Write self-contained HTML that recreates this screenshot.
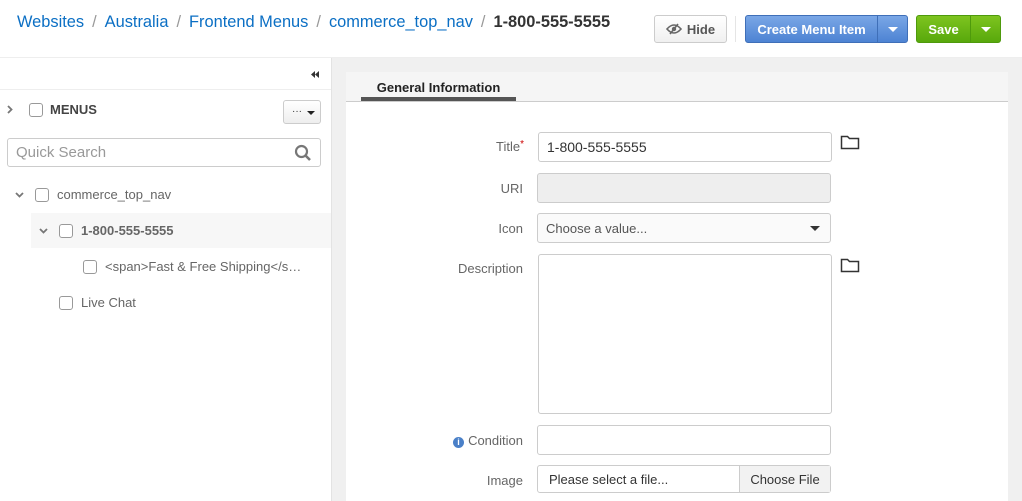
<!DOCTYPE html>
<html><head><style>
*{box-sizing:border-box;margin:0;padding:0}
body{width:1022px;height:501px;overflow:hidden;background:#fff;font-family:"Liberation Sans",sans-serif;position:relative;color:#555}
.a{position:absolute}
.bc{left:17px;top:13px;font-size:16.4px;color:#0b6fc4;white-space:nowrap}
.bc .s{color:#999;margin:0 8px}
.bc b{color:#333}
.btn{position:absolute;height:28px;border-radius:3px;font-size:13px;font-weight:bold;display:flex;align-items:center;justify-content:center}
.cb{position:absolute;width:14px;height:14px;border:1px solid #999;border-radius:3px;background:#fff}
.lbl{position:absolute;font-size:13px;color:#666;text-align:right;width:100px}
.inp{position:absolute;border:1px solid #ccc;border-radius:3px;background:#fff;font-size:14px;color:#333;padding-left:8px;display:flex;align-items:center}
.car{width:0;height:0;border-left:5px solid transparent;border-right:5px solid transparent;border-top:5px solid #fff}
</style></head><body>
<div class="a bc">Websites<span class="s">/</span>Australia<span class="s">/</span>Frontend Menus<span class="s">/</span>commerce_top_nav<span class="s">/</span><b>1-800-555-5555</b></div>
<div class="btn" style="left:654px;top:15px;width:73px;border:1px solid #ccc;background:linear-gradient(#fff,#f0f0f0);color:#555">
<svg width="16" height="12" viewBox="0 0 16 12" style="margin-right:5px"><path d="M1 6Q8-2 15 6Q8 14 1 6Z" fill="none" stroke="#666" stroke-width="1.6"/><circle cx="8" cy="6" r="2.2" fill="#666"/><path d="M4 11L12 1" stroke="#666" stroke-width="1.6"/></svg>Hide</div>
<div class="a" style="left:735px;top:16px;width:1px;height:26px;background:#e5e5e5"></div>
<div class="btn" style="left:745px;top:15px;width:163px;background:linear-gradient(#7aa7e6,#4d83d3);border:1px solid #3f6fb8;color:#fff;justify-content:flex-start">
<span style="width:131px;text-align:center">Create Menu Item</span><span style="width:1px;height:26px;background:#3f6fb8"></span><span style="flex:1;display:flex;justify-content:center"><span class="car"></span></span></div>
<div class="btn" style="left:916px;top:15px;width:85px;background:linear-gradient(#7ec41f,#58a80c);border:1px solid #4e9a0c;color:#fff;justify-content:flex-start">
<span style="width:53px;text-align:center">Save</span><span style="width:1px;height:26px;background:#4e9a0c"></span><span style="flex:1;display:flex;justify-content:center"><span class="car"></span></span></div>
<div class="a" style="left:0;top:57px;width:1022px;height:1px;background:#eee"></div>
<!-- sidebar -->
<div class="a" style="left:331px;top:58px;width:1px;height:443px;background:#e3e3e3"></div>
<svg class="a" style="left:311px;top:71px" width="8" height="7" viewBox="0 0 8 7"><path d="M4 0L0 3.5L4 7ZM8 0L4 3.5L8 7Z" fill="#333"/></svg>
<div class="a" style="left:0;top:89px;width:331px;height:1px;background:#eee"></div>
<svg class="a" style="left:7px;top:105px" width="6" height="9" viewBox="0 0 6 9"><path d="M1 1L4.5 4.5L1 8" fill="none" stroke="#777" stroke-width="1.8"/></svg>
<div class="cb" style="left:29px;top:103px"></div>
<div class="a" style="left:50px;top:102px;font-size:13px;font-weight:bold;color:#444">MENUS</div>
<div class="a" style="left:283px;top:100px;width:38px;height:24px;border:1px solid #ccc;border-radius:3px;background:linear-gradient(#fff,#eee);font-size:10px;color:#333;padding:5px 0 0 8px">···<span style="position:absolute;right:5px;top:10px;border-left:4px solid transparent;border-right:4px solid transparent;border-top:4px solid #222"></span></div>
<div class="inp" style="left:7px;top:138px;width:314px;height:29px;color:#999;font-size:15px">Quick Search
<svg width="18" height="18" viewBox="0 0 18 18" style="position:absolute;right:8px;top:5px"><circle cx="7.5" cy="7.5" r="5.5" fill="none" stroke="#777" stroke-width="2.2"/><path d="M11.5 11.5L16 16" stroke="#777" stroke-width="2.6"/></svg></div>
<svg class="a" style="left:15px;top:192px" width="9" height="6" viewBox="0 0 9 6"><path d="M1 1L4.5 4.5L8 1" fill="none" stroke="#777" stroke-width="1.8"/></svg>
<div class="cb" style="left:35px;top:188px"></div>
<div class="a" style="left:57px;top:187px;font-size:13px;color:#666">commerce_top_nav</div>
<div class="a" style="left:31px;top:213px;width:300px;height:35px;background:#f7f7f7"></div>
<svg class="a" style="left:39px;top:228px" width="9" height="6" viewBox="0 0 9 6"><path d="M1 1L4.5 4.5L8 1" fill="none" stroke="#777" stroke-width="1.8"/></svg>
<div class="cb" style="left:59px;top:224px"></div>
<div class="a" style="left:81px;top:223px;font-size:13px;font-weight:bold;color:#666">1-800-555-5555</div>
<div class="cb" style="left:83px;top:260px"></div>
<div class="a" style="left:105px;top:259px;font-size:13px;color:#666">&lt;span&gt;Fast &amp; Free Shipping&lt;/s…</div>
<div class="cb" style="left:59px;top:296px"></div>
<div class="a" style="left:81px;top:295px;font-size:13px;color:#666">Live Chat</div>
<!-- right -->
<div class="a" style="left:332px;top:58px;width:690px;height:443px;background:#f0f0f0"></div>
<div class="a" style="left:346px;top:72px;width:662px;height:429px;background:#fff"></div>
<div class="a" style="left:346px;top:72px;width:662px;height:30px;background:#f5f5f5;border-bottom:1px solid #ccc"></div>
<div class="a" style="left:361px;top:80px;width:155px;text-align:center;font-size:13px;font-weight:bold;color:#222">General Information</div>
<div class="a" style="left:361px;top:97px;width:155px;height:4px;background:#555"></div>
<div class="lbl" style="left:424px;top:139px">Title<span style="color:#c00;font-size:10px;vertical-align:top">*</span></div>
<div class="inp" style="left:538px;top:132px;width:294px;height:30px">1-800-555-5555</div>
<svg class="a" style="left:840px;top:134px" width="20" height="16" viewBox="0 0 20 16"><path d="M1.5 2.5h6l2 2h9v10h-17z" fill="none" stroke="#333" stroke-width="1.5"/></svg>
<div class="lbl" style="left:423px;top:181px">URI</div>
<div class="inp" style="left:537px;top:173px;width:294px;height:30px;background:#eee"></div>
<div class="lbl" style="left:423px;top:221px">Icon</div>
<div class="inp" style="left:537px;top:213px;width:294px;height:30px;background:#fafafa;font-size:13px;color:#555">Choose a value...<span style="position:absolute;right:10px;top:12px;border-left:5px solid transparent;border-right:5px solid transparent;border-top:5px solid #333"></span></div>
<div class="lbl" style="left:423px;top:261px">Description</div>
<div class="inp" style="left:538px;top:254px;width:294px;height:160px"></div>
<svg class="a" style="left:840px;top:257px" width="20" height="16" viewBox="0 0 20 16"><path d="M1.5 2.5h6l2 2h9v10h-17z" fill="none" stroke="#333" stroke-width="1.5"/></svg>
<div class="lbl" style="left:423px;top:433px"><span style="display:inline-block;width:11px;height:11px;border-radius:50%;background:#4a80c8;color:#fff;font-size:9px;font-weight:bold;text-align:center;line-height:11px;vertical-align:0;margin-right:4px">i</span>Condition</div>
<div class="inp" style="left:537px;top:425px;width:294px;height:30px"></div>
<div class="lbl" style="left:423px;top:473px">Image</div>
<div class="inp" style="left:537px;top:465px;width:294px;height:28px;font-size:13px;padding-left:11px">Please select a file...<span style="position:absolute;right:0;top:0;width:91px;height:26px;background:#f2f2f2;border-left:1px solid #ccc;display:flex;align-items:center;justify-content:center">Choose File</span></div>
</body></html>
